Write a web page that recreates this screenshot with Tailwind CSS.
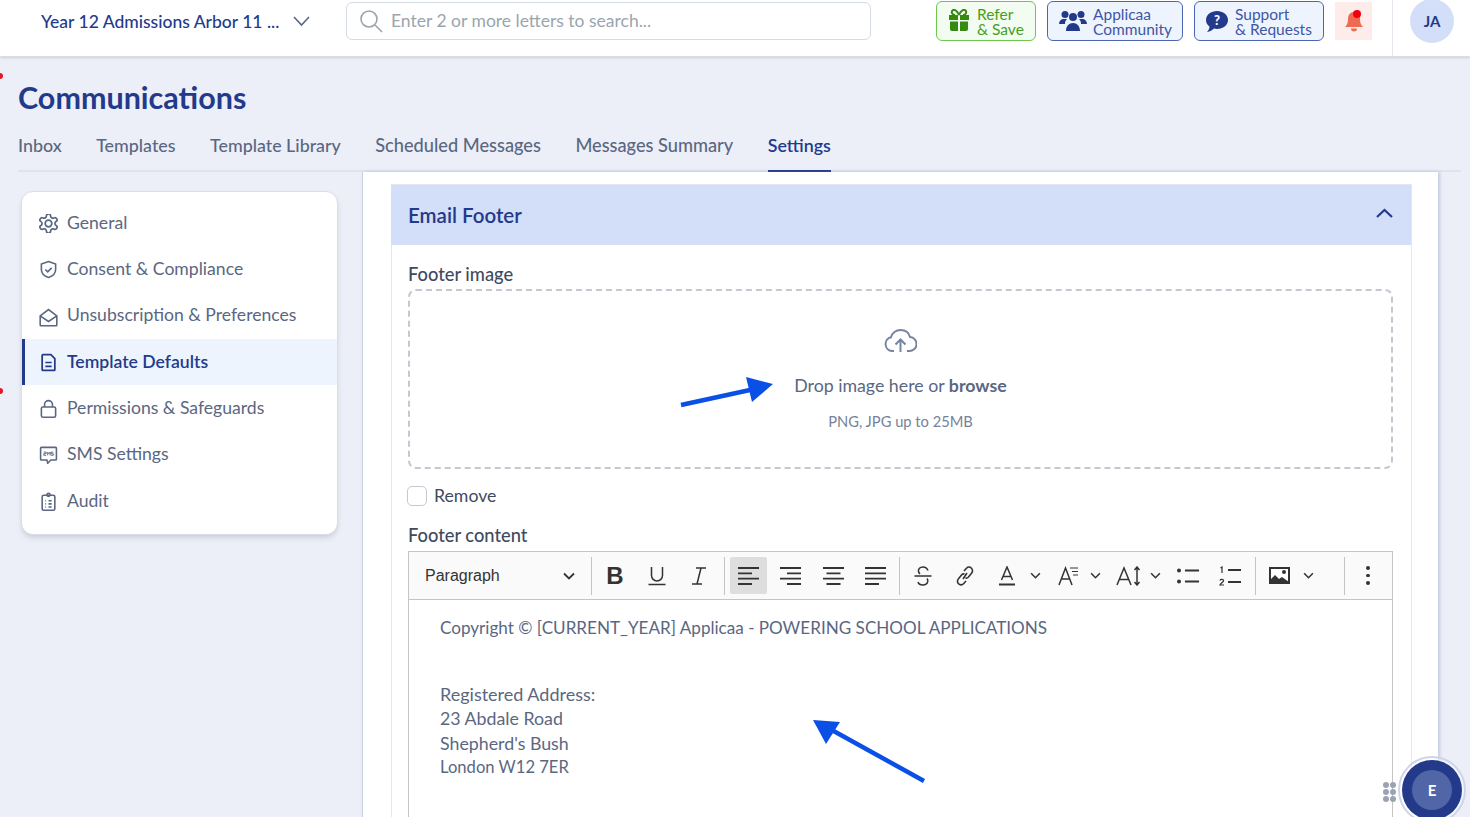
<!DOCTYPE html>
<html lang="en">
<head>
    <meta charset="UTF-8">
    <meta name="viewport" content="width=device-width, initial-scale=1.0">
    <title>Communications - Settings</title>
    <script src="https://cdn.jsdelivr.net/npm/@tailwindcss/browser@4"></script>
</head>
<body class="relative h-[817px] w-[1470px] overflow-hidden bg-[#eceff8] font-['Lato',sans-serif] text-[#5a6782]">

    <!-- Top bar -->
    <header class="flex h-[57px] items-start border-b border-[#d9dee8] bg-white shadow-sm">
        <div class="ml-[41px] mt-[11px] w-[242px] whitespace-nowrap text-[17.500px] leading-[22px] font-medium text-[#233a8b]">Year 12 Admissions Arbor 11 ...</div>
        <svg class="ml-[10px] mt-[15px] h-[12px] w-[17px] text-[#5a6782]" viewBox="0 0 17 12" fill="none" stroke="currentColor" stroke-width="1.6"><path d="M1 2l7.500 8L16 2"/></svg>
        <div class="ml-[36px] mt-[2px] flex h-[38px] w-[525px] items-center rounded-md border border-[#d5dbe3] pl-[12px] text-[17.500px] text-[#9aa5ae]">
            <svg class="h-[24px] w-[24px] text-[#9aa5ae]" viewBox="0 0 24 24" fill="none" stroke="currentColor" stroke-width="1.600"><circle cx="10" cy="10" r="8"/><path d="M16 16l7 7"/></svg>
            <span class="ml-[8px]">Enter 2 or more letters to search...</span>
        </div>
        <a class="ml-[65px] mt-[1px] flex h-[40px] w-[100px] items-center rounded-md border border-[#6fc74d] bg-[#f2fcf0] pl-[11px] text-[15.500px] leading-[15px] text-[#45a01e]">
            <svg class="h-[24px] w-[22px]" viewBox="0 0 22 24" fill="#358a10"><path d="M1 6h9v5H1zM12 6h9v5h-9zM2 12.500h8V22H4a2 2 0 0 1-2-2zM12 12.500h8V20a2 2 0 0 1-2 2h-6z"/><path d="M11 6C9 1 6 0 4.500 1.500S4 6 7 6M11 6c2-5 5-6 6.500-4.500S18 6 15 6" fill="none" stroke="#358a10" stroke-width="2"/></svg>
            <span class="ml-[7px] pt-[1px]">Refer<br>&amp; Save</span>
        </a>
        <a class="ml-[11px] mt-[1px] flex h-[40px] w-[136px] items-center rounded-md border border-[#4c66b4] bg-[#eef4fe] pl-[11px] text-[15.500px] leading-[15px] text-[#3e56a5]">
            <svg class="h-[22px] w-[28px]" viewBox="0 0 28 22" fill="#233a8b"><circle cx="6" cy="4.500" r="3.500"/><circle cx="22" cy="4.500" r="3.500"/><circle cx="14" cy="7" r="4"/><path d="M0 14c0-3 2-5 4.500-5H8c-1.500 1.500-2 3-2 5zM28 14c0-3-2-5-4.500-5H20c1.500 1.500 2 3 2 5zM7 21c0-5 3-8 7-8s7 3 7 8z"/></svg>
            <span class="ml-[6px] pt-[2px]">Applicaa<br>Community</span>
        </a>
        <a class="ml-[11px] mt-[1px] flex h-[40px] w-[130px] items-center rounded-md border border-[#4c66b4] bg-[#eef4fe] pl-[11px] text-[15.500px] leading-[15px] text-[#3e56a5]">
            <svg class="h-[21px] w-[22px]" viewBox="0 0 22 21"><path fill="#233a8b" d="M11 0c6 0 11 3.800 11 9s-5 9-11 9c-1 0-2-.1-3-.4C6.500 19 4 21 1 21c1.500-1.500 2.500-3.500 2.500-5.500C1.300 14 0 11.700 0 9c0-5.200 5-9 11-9z"/><text x="11" y="14" text-anchor="middle" font-size="13" font-weight="900" fill="#fff" font-family="Lato">?</text></svg>
            <span class="ml-[7px] pt-[2px]">Support<br>&amp; Requests</span>
        </a>
        <div class="relative ml-[11px] mt-[2px] flex h-[38px] w-[37px] items-center justify-center bg-[#fdecea]">
            <svg class="h-[24px] w-[18px]" viewBox="0 0 18 24" fill="#ee6a50"><path d="M9 3c4 0 6 3 6 7 0 4 1 6 3 8H0c2-2 3-4 3-8 0-4 2-7 6-7z"/><path d="M6 19.500h6a3 3 0 0 1-6 0z"/></svg>
            <span class="absolute left-[18px] top-[8px] h-[8px] w-[8px] rounded-full bg-[#f3000f]"></span>
        </div>
        <div class="ml-[20px] h-[56px] w-px bg-[#e3e6ec]"></div>
        <div class="ml-[17px] -mt-[1px] flex h-[44px] w-[44px] items-center justify-center rounded-full bg-[#d3dff8] text-[15px] font-bold text-[#233a8b]">JA</div>
    </header>

    <!-- Page title and tabs -->
    <div class="pl-[18px] pr-[9px]">
        <h1 class="mt-[22px] text-[30.500px] leading-[36px] font-bold text-[#233a8b]">Communications</h1>
        <nav class="mt-[18px] flex h-[39px] gap-[34.500px] border-b-2 border-[#dfe3ee] text-[17.850px] font-medium">
            <a class="pt-[1px] leading-[22px]">Inbox</a>
            <a class="pt-[1px] leading-[22px]">Templates</a>
            <a class="pt-[1px] leading-[22px]">Template Library</a>
            <a class="pt-[1px] text-[18.200px] leading-[22px]">Scheduled Messages</a>
            <a class="pt-[1px] text-[18.200px] leading-[22px]">Messages Summary</a>
            <a class="-mb-[2px] border-b-2 border-[#233a8b] pt-[1px] leading-[22px] font-semibold text-[#233a8b]">Settings</a>
        </nav>
    </div>

    <div class="flex items-start">
        <!-- Settings menu -->
        <aside class="ml-[21px] mt-[19px] h-[344px] w-[317px] shrink-0 rounded-xl border border-[#d8deea] bg-white pt-[8px] shadow-md">
            <a class="flex h-[46.330px] items-center pl-[17px] text-[17.600px]">
                <svg class="h-[19px] w-[19px]" viewBox="2 2 20 20" fill="none" stroke="currentColor" stroke-width="1.800"><circle cx="12" cy="12" r="3.500"/><path d="M12.220 2h-.44a2 2 0 0 0-2 2v.18a2 2 0 0 1-1 1.730l-.43.25a2 2 0 0 1-2 0l-.15-.08a2 2 0 0 0-2.730.73l-.22.38a2 2 0 0 0 .73 2.730l.15.1a2 2 0 0 1 1 1.720v.51a2 2 0 0 1-1 1.740l-.15.09a2 2 0 0 0-.73 2.730l.22.38a2 2 0 0 0 2.730.73l.15-.08a2 2 0 0 1 2 0l.43.25a2 2 0 0 1 1 1.730V20a2 2 0 0 0 2 2h.44a2 2 0 0 0 2-2v-.18a2 2 0 0 1 1-1.730l.43-.25a2 2 0 0 1 2 0l.15.08a2 2 0 0 0 2.730-.73l.22-.39a2 2 0 0 0-.73-2.730l-.15-.08a2 2 0 0 1-1-1.740v-.5a2 2 0 0 1 1-1.740l.15-.09a2 2 0 0 0 .73-2.730l-.22-.38a2 2 0 0 0-2.730-.73l-.15.08a2 2 0 0 1-2 0l-.43-.25a2 2 0 0 1-1-1.730V4a2 2 0 0 0-2-2z"/></svg>
                <span class="ml-[9px]">General</span>
            </a>
            <a class="flex h-[46.330px] items-center pl-[17px] text-[17.600px]">
                <svg class="h-[19px] w-[19px]" viewBox="0 0 24 24" fill="none" stroke="currentColor" stroke-width="2"><path d="M12 2l9 3v7c0 5-4 8.500-9 10-5-1.500-9-5-9-10V5z"/><path d="M8 12l3 3 5-5"/></svg>
                <span class="ml-[9px]">Consent &amp; Compliance</span>
            </a>
            <a class="flex h-[46.330px] items-center pl-[17px] text-[17.600px]">
                <svg class="mt-[3px] h-[19px] w-[19px]" viewBox="0 0 24 24" fill="none" stroke="currentColor" stroke-width="2"><path d="M1.500 10L12 2l10.500 8v11.500a1 1 0 0 1-1 1h-19a1 1 0 0 1-1-1z"/><path d="M1.500 10L12 17l10.500-7"/></svg>
                <span class="ml-[9px] -mt-[1px]">Unsubscription &amp; Preferences</span>
            </a>
            <a class="flex h-[46.330px] items-center border-l-[3px] border-[#233a8b] bg-[#eef4fe] pl-[14px] text-[17.600px] font-semibold text-[#233a8b]">
                <svg class="h-[19px] w-[19px]" viewBox="0 0 24 24" fill="none" stroke="currentColor" stroke-width="2.200"><path d="M5 2h10l5 5v14a1 1 0 0 1-1 1H5a1 1 0 0 1-1-1V3a1 1 0 0 1 1-1z"/><path d="M8 12h8M8 17h8"/></svg>
                <span class="ml-[9px]">Template Defaults</span>
            </a>
            <a class="flex h-[46.330px] items-center pl-[17px] text-[17.600px]">
                <svg class="h-[19px] w-[19px]" viewBox="0 0 24 24" fill="none" stroke="currentColor" stroke-width="2"><rect x="3" y="10" width="18" height="13" rx="2"/><path d="M7 10V7a5 5 0 0 1 10 0v3"/></svg>
                <span class="ml-[9px]">Permissions &amp; Safeguards</span>
            </a>
            <a class="flex h-[46.330px] items-center pl-[17px] text-[17.600px]">
                <svg class="h-[19px] w-[19px]" viewBox="0 0 24 24" fill="none" stroke="currentColor" stroke-width="2"><path d="M3 3h18a1 1 0 0 1 1 1v14a1 1 0 0 1-1 1h-6l-4 4-1-4H3a1 1 0 0 1-1-1V4a1 1 0 0 1 1-1z"/><path d="M6 9h3v2H6v2h3M11 13V9l1.500 2L14 9v4M18 9h-3v2h3v2h-3" stroke-width="1.200"/></svg>
                <span class="ml-[9px] -mt-[1px]">SMS Settings</span>
            </a>
            <a class="flex h-[46.330px] items-center pl-[17px] text-[17.600px]">
                <svg class="h-[19px] w-[19px]" viewBox="0 0 24 24" fill="none" stroke="currentColor" stroke-width="2"><rect x="4" y="4" width="16" height="19" rx="2"/><circle cx="12" cy="3.500" r="2"/><path d="M8 11h1M12 11h4M8 15h1M12 15h4M8 19h1M12 19h4"/></svg>
                <span class="ml-[9px]">Audit</span>
            </a>
        </aside>

        <!-- Settings content -->
        <main class="ml-[24px] h-[645px] w-[1076px] shrink-0 border-l border-[#c8cfdf] bg-white pl-[28px] pt-[12px] shadow-[2px_0_3px_rgba(120,135,180,0.35)]">
            <section class="h-[633px] w-[1021px] overflow-hidden border-r border-t border-[#e3e6ef]">
                <div class="flex h-[60px] items-center justify-between bg-[#d3dff8] pl-[17px] pr-[18px] text-[#233a8b]">
                    <h2 class="text-[20.500px] font-semibold">Email Footer</h2>
                    <svg class="mb-[4px] h-[11px] w-[17px]" viewBox="0 0 17 11" fill="none" stroke="currentColor" stroke-width="2.200"><path d="M1 9l7.500-7L16 9"/></svg>
                </div>
                <div class="h-[573px] border-l border-[#e3e6ef] pl-[16px] pr-[18px]">
                    <div class="pt-[17px] text-[18.300px] leading-[24px] font-medium text-[#3f4a5f]">Footer image</div>
                    <div class="mt-[3px] flex h-[180px] flex-col items-center rounded-lg border-2 border-dashed border-[#c4c8d0]">
                        <svg class="mt-[38px] h-[24px] w-[33px] text-[#77859f]" viewBox="0 0 33 24" fill="none" stroke="currentColor" stroke-width="2"><path d="M10 22H8a7 7 0 0 1-1-13.800C8 4 12 1 16.500 1c5 0 8.500 3 9.500 7a7 7 0 0 1-1 14h-2"/><path d="M16.500 23V11M11.500 15.500l5-5 5 5"/></svg>
                        <p class="mt-[21px] text-[17.750px] leading-[22px]">Drop image here or <b class="font-bold">browse</b></p>
                        <p class="mt-[16px] text-[14.700px] leading-[18px] text-[#75829b]">PNG, JPG up to 25MB</p>
                    </div>
                    <label class="mt-[16px] flex h-[22px] items-center text-[17.700px] text-[#3f4a5f]">
                        <span class="-ml-px h-[20px] w-[20px] rounded-[5px] border border-[#c4c8d0] bg-white"></span>
                        <span class="ml-[7px]">Remove</span>
                    </label>
                    <div class="mt-[16px] text-[18.300px] leading-[24px] font-medium text-[#3f4a5f]">Footer content</div>

                    <!-- Editor -->
                    <div class="mt-[4px] h-[266px] border-x border-t border-[#c4c4c4]">
                        <div class="flex h-[48px] items-center border-b border-[#c4c4c4] bg-[#fafafa] font-['Liberation_Sans',sans-serif] text-[#333333]">
                            <div class="flex h-[36px] w-[182px] items-center justify-between pl-[16px] pr-[16px] text-[16px]">
                                <span>Paragraph</span>
                                <svg class="h-[8px] w-[12px]" viewBox="0 0 12 8" fill="none" stroke="currentColor" stroke-width="1.800"><path d="M1 1.500l5 5 5-5"/></svg>
                            </div>
                            <span class="h-[38px] w-px bg-[#c4c4c4]"></span>
                            <span class="ml-[2px] flex w-[42px] justify-center text-[24px] leading-none font-bold">B</span>
                            <span class="flex w-[42px] justify-center"><svg class="h-[20px] w-[18px]" viewBox="0 0 18 20" fill="none" stroke="currentColor" stroke-width="1.500"><path d="M3.500 1v8.500a5.500 5.500 0 0 0 11 0V1M0.500 18.500h17"/></svg></span>
                            <span class="flex w-[42px] justify-center"><svg class="h-[18px] w-[14px]" viewBox="0 0 14 18" fill="none" stroke="currentColor" stroke-width="1.500"><path d="M4 1h10M0 17h10M9 1L5 17"/></svg></span>
                            <span class="ml-[4px] h-[38px] w-px bg-[#c4c4c4]"></span>
                            <span class="ml-[5px] flex h-[37px] w-[37px] items-center justify-center rounded-[2px] bg-[#dedede]"><svg class="h-[18px] w-[21px]" viewBox="0 0 21 18" fill="none" stroke="currentColor" stroke-width="1.800"><path d="M0 1h21M0 6.300h14M0 11.600h21M0 17h14"/></svg></span>
                            <span class="ml-[2px] flex w-[42px] justify-center"><svg class="h-[18px] w-[21px]" viewBox="0 0 21 18" fill="none" stroke="currentColor" stroke-width="1.800"><path d="M0 1h21M7 6.300h14M0 11.600h21M7 17h14"/></svg></span>
                            <span class="ml-px flex w-[42px] justify-center"><svg class="h-[18px] w-[21px]" viewBox="0 0 21 18" fill="none" stroke="currentColor" stroke-width="1.800"><path d="M0 1h21M3.500 6.300h14M0 11.600h21M3.500 17h14"/></svg></span>
                            <span class="flex w-[42px] justify-center"><svg class="h-[18px] w-[21px]" viewBox="0 0 21 18" fill="none" stroke="currentColor" stroke-width="1.800"><path d="M0 1h21M0 6.300h21M0 11.600h21M0 17h14"/></svg></span>
                            <span class="ml-[3px] h-[38px] w-px bg-[#c4c4c4]"></span>
                            <span class="ml-[2px] flex w-[42px] justify-center"><svg class="h-[20px] w-[18px]" viewBox="0 0 18 20" fill="none" stroke="currentColor" stroke-width="1.500"><path d="M14 4.500C13 2 11 1 9 1 6 1 4 3 4.500 5.500c.2 1 .8 1.800 1.500 2.500M0.500 10h17M13 12.500c.8 1 1 2 .7 3.200C13 18 11 19 9 19c-2.500 0-4.500-1-5-3"/></svg></span>
                            <span class="flex w-[42px] justify-center"><svg class="h-[20px] w-[18px]" viewBox="0 0 18 20" fill="none" stroke="currentColor" stroke-width="1.600"><path d="M8 5l2.500-2.800a3.500 3.500 0 0 1 5 5L12.500 11c-1 1-2 1.300-3 1M10 15l-2.500 2.800a3.500 3.500 0 0 1-5-5L5.500 9c1-1 2-1.300 3-1M7 13l4-6"/></svg></span>
                            <span class="flex w-[42px] justify-center"><svg class="h-[20px] w-[18px]" viewBox="0 0 18 20" fill="none" stroke="currentColor" stroke-width="1.500"><path d="M3.500 14L9 1l5.500 13M5 10.500h8"/><path d="M1 18.500h16" stroke-width="2"/></svg></span>
                            <span class="flex w-[14px] justify-center"><svg class="h-[7px] w-[11px]" viewBox="0 0 12 8" fill="none" stroke="currentColor" stroke-width="1.800"><path d="M1 1.500l5 5 5-5"/></svg></span>
                            <span class="ml-[6px] flex w-[40px] justify-center"><svg class="h-[20px] w-[21px]" viewBox="0 0 21 20" fill="none" stroke="currentColor" stroke-width="1.500"><path d="M1 19L7.500 2 14 19M3.500 13h8"/><path d="M12 2h8M14 5.500h6M15 9h5" stroke-width="1.200"/></svg></span>
                            <span class="flex w-[14px] justify-center"><svg class="h-[7px] w-[11px]" viewBox="0 0 12 8" fill="none" stroke="currentColor" stroke-width="1.800"><path d="M1 1.500l5 5 5-5"/></svg></span>
                            <span class="ml-[7px] flex w-[39px] justify-center"><svg class="h-[20px] w-[25px]" viewBox="0 0 25 20" fill="none" stroke="currentColor" stroke-width="1.500"><path d="M1 19L8 2l7 17M3.500 13.500h9"/><path d="M21 1v18M18.500 4L21 1l2.500 3M18.500 16l2.500 3 2.500-3"/></svg></span>
                            <span class="flex w-[14px] justify-center"><svg class="h-[7px] w-[11px]" viewBox="0 0 12 8" fill="none" stroke="currentColor" stroke-width="1.800"><path d="M1 1.500l5 5 5-5"/></svg></span>
                            <span class="ml-[5px] flex w-[42px] justify-center"><svg class="h-[16px] w-[22px]" viewBox="0 0 22 16"><path d="M8 2.500h14M8 13.500h14" stroke="currentColor" stroke-width="1.800"/><circle cx="2" cy="2.500" r="2" fill="currentColor"/><circle cx="2" cy="13.500" r="2" fill="currentColor"/></svg></span>
                            <span class="flex w-[42px] justify-center"><svg class="h-[20px] w-[22px]" viewBox="0 0 22 20" fill="none" stroke="currentColor"><path d="M9 4h13M9 16h13" stroke-width="1.800"/><path d="M1.500 2L3 1v6M1 14.500c.5-1.500 4-1.500 3.500.5-.2.800-3 2.500-3.500 4h4" stroke-width="1.200"/></svg></span>
                            <span class="ml-[4px] h-[38px] w-px bg-[#c4c4c4]"></span>
                            <span class="ml-[2px] flex w-[42px] justify-center"><svg class="h-[17px] w-[21px]" viewBox="0 0 21 17"><rect x="1" y="1" width="19" height="15" fill="#fff" stroke="currentColor" stroke-width="2"/><path fill="currentColor" d="M1 16V13l5-5 4 4 3-2 7 5v1z"/><circle cx="15" cy="5" r="2" fill="currentColor"/></svg></span>
                            <span class="ml-px flex w-[14px] justify-center"><svg class="h-[7px] w-[11px]" viewBox="0 0 12 8" fill="none" stroke="currentColor" stroke-width="1.800"><path d="M1 1.500l5 5 5-5"/></svg></span>
                            <span class="ml-[29px] h-[38px] w-px bg-[#c4c4c4]"></span>
                            <span class="ml-[16px] flex w-[14px] flex-col items-center gap-[4px]">
                                <i class="h-[3.500px] w-[3.500px] rounded-full bg-[#333333]"></i>
                                <i class="h-[3.500px] w-[3.500px] rounded-full bg-[#333333]"></i>
                                <i class="h-[3.500px] w-[3.500px] rounded-full bg-[#333333]"></i>
                            </span>
                        </div>
                        <div class="pl-[31px] pt-[16px] text-[17.800px] leading-[24.500px]">
                            <p class="text-[17.100px]">Copyright © [CURRENT_YEAR] Applicaa - POWERING SCHOOL APPLICATIONS</p>
                            <p class="mt-[41px] text-[18px]">Registered Address:</p>
                            <p>23 Abdale Road</p>
                            <p>Shepherd's Bush</p>
                            <p class="text-[16.600px]">London W12 7ER</p>
                        </div>
                    </div>
                </div>
            </section>
        </main>
    </div>

    <!-- Annotation arrows drawn over the screenshot -->
    <svg class="pointer-events-none absolute left-0 top-0 h-[817px] w-[1470px]" viewBox="0 0 1470 817">
        <path d="M681 405L750 390" stroke="#0a50e6" stroke-width="4.500" fill="none"/>
        <path d="M773 384L746 377 752 402z" fill="#0a50e6"/>
        <path d="M924 781L830 729" stroke="#0a50e6" stroke-width="4.500" fill="none"/>
        <path d="M813 720L840 722 826 744z" fill="#0a50e6"/>
    </svg>

    <!-- Red edge markers -->
    <span class="absolute -left-[3px] top-[73px] h-[6px] w-[6px] rounded-full bg-[#e0162b]"></span>
    <span class="absolute -left-[3px] top-[388px] h-[6px] w-[6px] rounded-full bg-[#e0162b]"></span>

    <!-- Floating assistant button -->
    <div class="absolute left-[1383px] top-[782px] grid grid-cols-2 gap-[1.500px]">
        <i class="h-[5.500px] w-[5.500px] rounded-full bg-[#9ba3b3]"></i><i class="h-[5.500px] w-[5.500px] rounded-full bg-[#9ba3b3]"></i>
        <i class="h-[5.500px] w-[5.500px] rounded-full bg-[#9ba3b3]"></i><i class="h-[5.500px] w-[5.500px] rounded-full bg-[#9ba3b3]"></i>
        <i class="h-[5.500px] w-[5.500px] rounded-full bg-[#9ba3b3]"></i><i class="h-[5.500px] w-[5.500px] rounded-full bg-[#9ba3b3]"></i>
    </div>
    <div class="absolute left-[1398px] top-[756px] flex h-[68px] w-[68px] items-center justify-center rounded-full border-2 border-[#cdd5ea] bg-white/40">
        <div class="flex h-[60px] w-[60px] items-center justify-center rounded-full bg-[#233a8b]">
            <div class="flex h-[40px] w-[40px] items-center justify-center rounded-full bg-[#5066a6] text-[15px] font-bold text-white">E</div>
        </div>
    </div>

</body>
</html>
